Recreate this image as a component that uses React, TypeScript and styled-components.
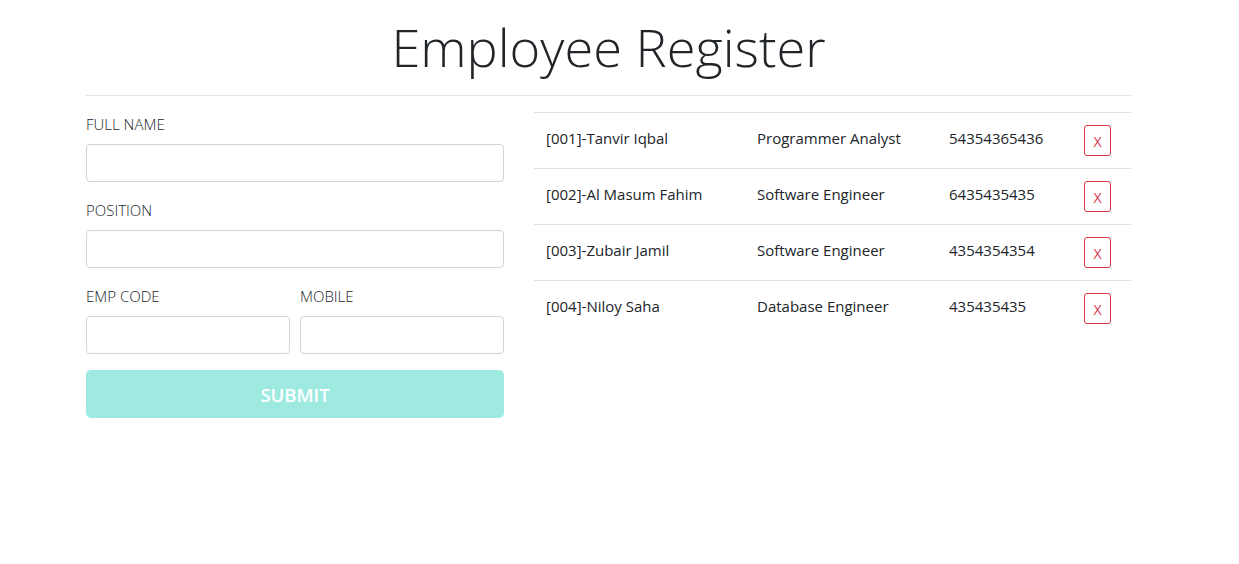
import React from "react";
import styled, { createGlobalStyle } from "styled-components";

const GlobalStyle = createGlobalStyle`
  * { box-sizing: border-box; }
  body {
    margin: 0;
    background: #fff;
    color: #212529;
    font-family: "Open Sans", "Noto Sans", sans-serif;
  }
`;

const Page = styled.div`
  width: 1045px;
  margin-left: 86px;
  padding-top: 14px;
`;

const Title = styled.h1`
  margin: 0;
  text-align: center;
  font-size: 52.4px;
  font-weight: 300;
  line-height: 66px;
  color: #212529;
`;

const Rule = styled.hr`
  margin: 15px 0 16px;
  border: 0;
  border-top: 1px solid #e5e5e5;
`;

const Columns = styled.div`
  display: flex;
  gap: 30px;
  align-items: flex-start;
`;

const Form = styled.form`
  width: 418px;
  display: flex;
  flex-direction: column;
`;

const Group = styled.div`
  display: flex;
  flex-direction: column;
  margin-bottom: 16px;
  flex: 1;
`;

const Pair = styled.div`
  display: flex;
  gap: 10px;
`;

const Label = styled.label`
  font-size: 15px;
  font-weight: 300;
  line-height: 24px;
  height: 24px;
  text-transform: uppercase;
  margin-bottom: 8px;
  color: #212529;
`;

const Input = styled.input`
  height: 38px;
  width: 100%;
  border: 1px solid #ced4da;
  border-radius: 4px;
  padding: 6px 12px;
  font: inherit;
`;

const Submit = styled.button`
  height: 48px;
  border: 0;
  border-radius: 5px;
  background: #9eeae1;
  color: #fff;
  font-family: "Open Sans", sans-serif;
  font-size: 18.5px;
  font-weight: 600;
  padding-top: 2px;
  text-transform: uppercase;
`;

const Table = styled.table`
  width: 597px;
  border-collapse: collapse;
  font-size: 15px;
  color: #212529;
`;

const Row = styled.tr`
  border-top: 1px solid #dee2e6;
`;

const Cell = styled.td<{ $w: number }>`
  width: ${(p) => p.$w}px;
  padding: 13px 12px 11px;
  height: 55px;
  vertical-align: top;
  line-height: 24px;
`;

const ActionCell = styled.td`
  width: 59px;
  padding: 12px;
  height: 55px;
  vertical-align: top;
`;

const DeleteButton = styled.button`
  width: 27px;
  height: 31px;
  padding: 2px 0 0;
  border: 1px solid #dc3545;
  border-radius: 3px;
  background: #fff;
  color: #dc3545;
  font-family: "Open Sans", sans-serif;
  font-size: 14px;
`;

const employees = [
  { code: "001", name: "Tanvir Iqbal", position: "Programmer Analyst", mobile: "54354365436" },
  { code: "002", name: "Al Masum Fahim", position: "Software Engineer", mobile: "6435435435" },
  { code: "003", name: "Zubair Jamil", position: "Software Engineer", mobile: "4354354354" },
  { code: "004", name: "Niloy Saha", position: "Database Engineer", mobile: "435435435" },
];

export default function App() {
  return (
    <>
      <GlobalStyle />
      <Page>
        <Title>Employee Register</Title>
        <Rule />
        <Columns>
          <Form onSubmit={(e) => e.preventDefault()}>
            <Group>
              <Label>Full Name</Label>
              <Input />
            </Group>
            <Group>
              <Label>Position</Label>
              <Input />
            </Group>
            <Pair>
              <Group>
                <Label>Emp Code</Label>
                <Input />
              </Group>
              <Group>
                <Label>Mobile</Label>
                <Input />
              </Group>
            </Pair>
            <Submit type="submit">Submit</Submit>
          </Form>
          <Table>
            <tbody>
              {employees.map((emp) => (
                <Row key={emp.code}>
                  <Cell $w={211}>[{emp.code}]-{emp.name}</Cell>
                  <Cell $w={192}>{emp.position}</Cell>
                  <Cell $w={135}>{emp.mobile}</Cell>
                  <ActionCell>
                    <DeleteButton>X</DeleteButton>
                  </ActionCell>
                </Row>
              ))}
            </tbody>
          </Table>
        </Columns>
      </Page>
    </>
  );
}
